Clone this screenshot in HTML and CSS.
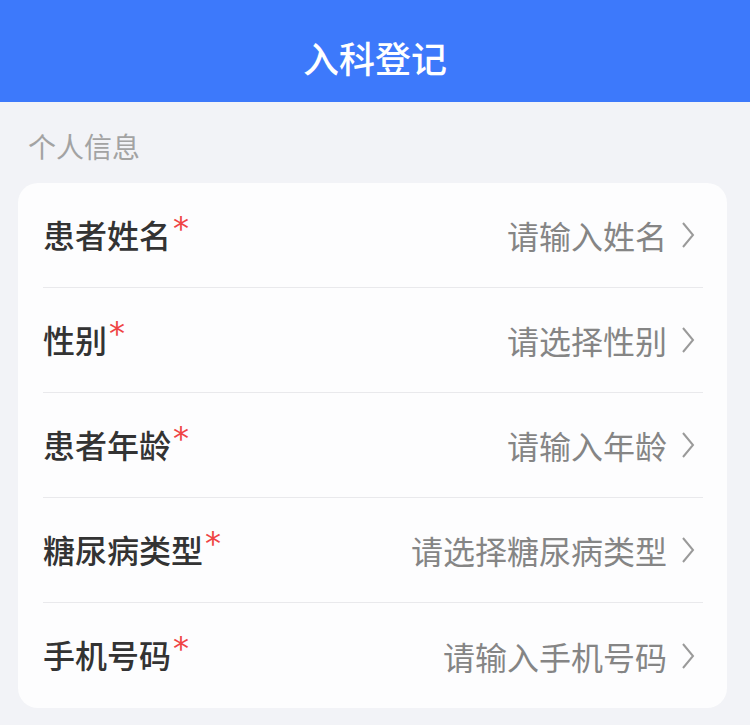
FILE: index.html
```html
<!DOCTYPE html>
<html lang="zh-CN">
<head>
    <meta charset="UTF-8">
    <meta name="viewport" content="width=device-width, initial-scale=1.0">
    <title>入科登记</title>
    <link rel="stylesheet" href="styles.css">
</head>
<body>
    <div class="nav-bar">入科登记</div>

    <div class="section-title">个人信息</div>

    <div class="form-card">
        <div class="form-row">
            <div class="label">患者姓名<span class="required">*</span></div>
            <div class="value">
                <span class="placeholder">请输入姓名</span>
                <svg class="arrow" width="14" height="28" viewBox="0 0 14 28"><polyline points="2,2 12,14 2,26" /></svg>
            </div>
        </div>
        <div class="form-row">
            <div class="label">性别<span class="required">*</span></div>
            <div class="value">
                <span class="placeholder">请选择性别</span>
                <svg class="arrow" width="14" height="28" viewBox="0 0 14 28"><polyline points="2,2 12,14 2,26" /></svg>
            </div>
        </div>
        <div class="form-row">
            <div class="label">患者年龄<span class="required">*</span></div>
            <div class="value">
                <span class="placeholder">请输入年龄</span>
                <svg class="arrow" width="14" height="28" viewBox="0 0 14 28"><polyline points="2,2 12,14 2,26" /></svg>
            </div>
        </div>
        <div class="form-row">
            <div class="label">糖尿病类型<span class="required">*</span></div>
            <div class="value">
                <span class="placeholder">请选择糖尿病类型</span>
                <svg class="arrow" width="14" height="28" viewBox="0 0 14 28"><polyline points="2,2 12,14 2,26" /></svg>
            </div>
        </div>
        <div class="form-row">
            <div class="label">手机号码<span class="required">*</span></div>
            <div class="value">
                <span class="placeholder">请输入手机号码</span>
                <svg class="arrow" width="14" height="28" viewBox="0 0 14 28"><polyline points="2,2 12,14 2,26" /></svg>
            </div>
        </div>
    </div>
</body>
</html>
```

FILE: styles.css
```css
body {
    margin: 0;
    font-family: "Noto Sans CJK SC", "Noto Sans", sans-serif;
    background-color: #f2f3f7;
    color: #333;
}

.nav-bar {
    height: 90px;
    padding-top: 12px;
    line-height: 90px;
    text-align: center;
    background-color: #3d79fb;
    color: #fff;
    font-size: 36px;
    font-weight: 500;
}

.section-title {
    padding: 30px 0 23px 28px;
    line-height: 28px;
    font-size: 28px;
    color: #a3a3a3;
}

.form-card {
    margin: 0 23px 0 18px;
    padding: 0 24px 0 25px;
    background-color: #fdfdfe;
    border-radius: 20px;
}

.form-row {
    display: flex;
    align-items: center;
    justify-content: space-between;
    height: 104px;
    border-bottom: 1px solid #e9e9ec;
}

.form-row:last-child {
    height: 105px;
    border-bottom: none;
}

.label {
    font-size: 32px;
    font-weight: 500;
    color: #333;
    line-height: 40px;
}

.required {
    position: relative;
    top: -9px;
    margin-left: 2px;
    font-family: "DejaVu Sans", sans-serif;
    font-size: 32px;
    font-weight: normal;
    color: #ef4444;
}

.value {
    display: flex;
    align-items: center;
    gap: 14px;
    padding-right: 8px;
}

.placeholder {
    font-size: 32px;
    color: #858585;
    line-height: 40px;
}

.arrow polyline {
    fill: none;
    stroke: #9a9a9a;
    stroke-width: 2;
}
```
